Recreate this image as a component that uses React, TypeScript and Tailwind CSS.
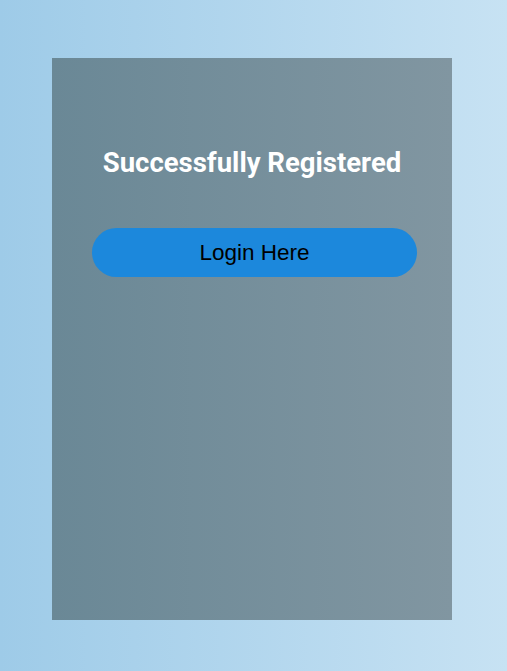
export default function App() {
  return (
    <div className="min-h-[671px] w-full bg-gradient-to-r from-[#9ecbe8] to-[#c7e2f3] pt-[58px]">
      <div className="ml-[52px] w-[400px] h-[562px] bg-gradient-to-r from-[#6a8896] to-[#8196a1] pt-[89px]">
        <h1 className="text-center text-white font-bold text-[27.5px] leading-[32px] font-['Roboto',sans-serif]">
          Successfully Registered
        </h1>
        <button className="mt-[49px] ml-[40px] w-[325px] h-[49px] rounded-full bg-[#1c88dc] text-black text-[22.5px] font-['Liberation_Sans',Arial,sans-serif]">
          Login Here
        </button>
      </div>
    </div>
  );
}
